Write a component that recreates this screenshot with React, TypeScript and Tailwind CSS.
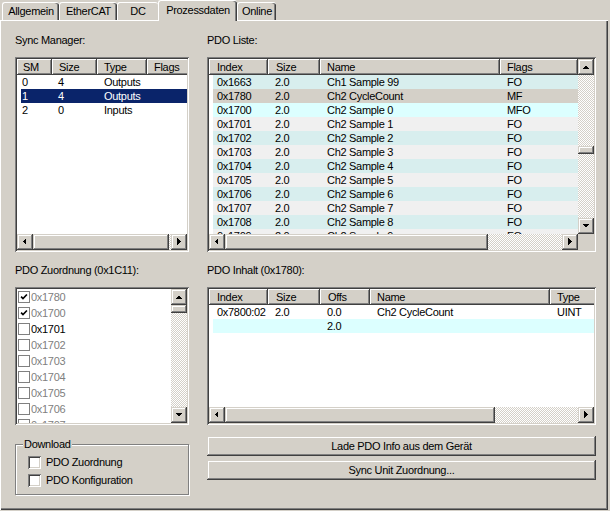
import React from 'react';

// classic 3D edges
const raised =
  'bg-[#d4d0c8] shadow-[inset_-1px_-1px_0_#404040,inset_1px_1px_0_#d4d0c8,inset_-2px_-2px_0_#808080,inset_2px_2px_0_#ffffff]';
const headerCell =
  'bg-[#d4d0c8] shadow-[inset_-1px_-1px_0_#404040,inset_1px_1px_0_#ffffff,inset_-2px_-2px_0_#808080]';
const sunken =
  'bg-white p-[2px] shadow-[inset_1px_1px_0_#808080,inset_-1px_-1px_0_#ffffff,inset_2px_2px_0_#404040,inset_-2px_-2px_0_#d4d0c8]';
const checker =
  'bg-[image:repeating-conic-gradient(#d4d0c8_0_25%,#ffffff_0_50%)] bg-[length:2px_2px]';

const arrowPaths = {
  up: 'M4 10 H11 L7.5 6.5 Z',
  down: 'M4 6 H11 L7.5 9.5 Z',
  left: 'M9 4 V11 L5.5 7.5 Z',
  right: 'M6 4 V11 L9.5 7.5 Z',
};

const Arrow = ({ dir }: { dir: keyof typeof arrowPaths }) => (
  <div className={`w-[16px] h-[16px] shrink-0 ${raised}`}>
    <svg width="16" height="16" viewBox="0 0 16 16" shapeRendering="crispEdges">
      <path d={arrowPaths[dir]} fill="#000" />
    </svg>
  </div>
);

type Cell = { text: string; cls: string };

const Header = ({ cells }: { cells: Cell[] }) => (
  <div className="flex h-[16px] shrink-0 overflow-hidden">
    {cells.map((c) => (
      <div key={c.text} className={`${headerCell} ${c.cls} h-[16px] shrink-0 leading-[16px] whitespace-nowrap overflow-hidden`}>
        {c.text}
      </div>
    ))}
  </div>
);

const Row = ({ values, cls, bg }: { values: string[]; cls: string[]; bg: string }) => (
  <div className={`flex h-[14px] leading-[14px] ml-[4px] shrink-0 whitespace-nowrap ${bg}`}>
    {values.map((v, i) => (
      <div key={i} className={`${cls[i]} shrink-0 overflow-hidden`}>
        {v}
      </div>
    ))}
  </div>
);

const CheckMark = () => (
  <svg width="12" height="12" viewBox="0 0 12 12">
    <path d="M2.5 5.5 L4.8 7.8 L9.5 3" stroke="#000" strokeWidth="2" fill="none" />
  </svg>
);

const tabs = [
  { label: 'Allgemein', cls: 'w-[57px]' },
  { label: 'EtherCAT', cls: 'w-[58px]' },
  { label: 'DC', cls: 'w-[41px]', beforeActive: true },
  { label: 'Prozessdaten', cls: 'w-[79px]', active: true },
  { label: 'Online', cls: 'w-[39px]' },
];

const smHeader: Cell[] = [
  { text: 'SM', cls: 'w-[35px] pl-[6px]' },
  { text: 'Size', cls: 'w-[45px] pl-[7px]' },
  { text: 'Type', cls: 'w-[50px] pl-[7px]' },
  { text: 'Flags', cls: 'w-[46px] pl-[7px]' },
];
const smCols = ['w-[31px] pl-[1px]', 'w-[45px] pl-[6px]', 'w-[50px] pl-[7px]', 'w-[40px] pl-[7px]'];
const smRows = [
  { v: ['0', '4', 'Outputs', ''], bg: '' },
  { v: ['1', '4', 'Outputs', ''], bg: 'bg-[#0a246a] text-white' },
  { v: ['2', '0', 'Inputs', ''], bg: '' },
];

const pdoHeader: Cell[] = [
  { text: 'Index', cls: 'w-[59px] pl-[8px]' },
  { text: 'Size', cls: 'w-[52px] pl-[8px]' },
  { text: 'Name', cls: 'w-[180px] pl-[7px]' },
  { text: 'Flags', cls: 'w-[78px] pl-[7px]' },
];
const pdoCols = ['w-[55px] pl-[4px]', 'w-[52px] pl-[7px]', 'w-[180px] pl-[7px]', 'w-[78px] pl-[7px]'];
const cyan = 'bg-[#d8eeee]';
const light = 'bg-[#f0f0f0]';
const pdoRows = [
  { v: ['0x1663', '2.0', 'Ch1 Sample 99', 'FO'], bg: cyan },
  { v: ['0x1780', '2.0', 'Ch2 CycleCount', 'MF'], bg: 'bg-[#d4d0c8]' },
  { v: ['0x1700', '2.0', 'Ch2 Sample 0', 'MFO'], bg: 'bg-[#dcffff]' },
  { v: ['0x1701', '2.0', 'Ch2 Sample 1', 'FO'], bg: light },
  { v: ['0x1702', '2.0', 'Ch2 Sample 2', 'FO'], bg: cyan },
  { v: ['0x1703', '2.0', 'Ch2 Sample 3', 'FO'], bg: light },
  { v: ['0x1704', '2.0', 'Ch2 Sample 4', 'FO'], bg: cyan },
  { v: ['0x1705', '2.0', 'Ch2 Sample 5', 'FO'], bg: light },
  { v: ['0x1706', '2.0', 'Ch2 Sample 6', 'FO'], bg: cyan },
  { v: ['0x1707', '2.0', 'Ch2 Sample 7', 'FO'], bg: light },
  { v: ['0x1708', '2.0', 'Ch2 Sample 8', 'FO'], bg: cyan },
  { v: ['0x1709', '2.0', 'Ch2 Sample 9', 'FO'], bg: light },
];

const assignItems = [
  { id: '0x1780', checked: true, enabled: false },
  { id: '0x1700', checked: true, enabled: false },
  { id: '0x1701', checked: false, enabled: true },
  { id: '0x1702', checked: false, enabled: false },
  { id: '0x1703', checked: false, enabled: false },
  { id: '0x1704', checked: false, enabled: false },
  { id: '0x1705', checked: false, enabled: false },
  { id: '0x1706', checked: false, enabled: false },
  { id: '0x1707', checked: false, enabled: false },
];

const contentHeader: Cell[] = [
  { text: 'Index', cls: 'w-[59px] pl-[8px]' },
  { text: 'Size', cls: 'w-[52px] pl-[8px]' },
  { text: 'Offs', cls: 'w-[50px] pl-[8px]' },
  { text: 'Name', cls: 'w-[180px] pl-[7px]' },
  { text: 'Type', cls: 'w-[60px] pl-[7px]' },
];
const contentCols = ['w-[55px] pl-[4px]', 'w-[52px] pl-[7px]', 'w-[50px] pl-[7px]', 'w-[180px] pl-[7px]', 'w-[44px] pl-[7px]'];

const Checkbox3D = () => (
  <div className="w-[13px] h-[13px] shrink-0 bg-white shadow-[inset_1px_1px_0_#808080,inset_-1px_-1px_0_#ffffff,inset_2px_2px_0_#404040,inset_-2px_-2px_0_#d4d0c8]" />
);

export default function App() {
  return (
    <div className="w-[610px] h-[511px] bg-[#d4d0c8] font-['Liberation_Sans',Arial,sans-serif] text-[11px] leading-[13px] tracking-[-0.3px] text-black select-none">
      {/* tabs */}
      <div className="flex items-end h-[20px] pl-[2px]">
        {tabs.map((t) =>
          t.active ? (
            <div
              key={t.label}
              className={`${t.cls} relative z-10 -mb-px h-[21px] shrink-0 bg-[#d4d0c8] border-l border-t border-white rounded-t-[3px] shadow-[inset_-1px_0_0_#404040,inset_-2px_0_0_#808080] text-center pt-[3px]`}
            >
              {t.label}
            </div>
          ) : (
            <div
              key={t.label}
              className={`${t.cls} h-[18px] shrink-0 flex items-center justify-center border-l border-t border-white rounded-t-[3px] ${
                t.beforeActive ? '' : 'shadow-[inset_-1px_0_0_#404040,inset_-2px_0_0_#808080]'
              }`}
            >
              {t.label}
            </div>
          )
        )}
      </div>

      {/* panel */}
      <div className="w-[608px] h-[490px] pt-[14px] pl-[15px] shadow-[inset_1px_1px_0_#ffffff,inset_-1px_-1px_0_#404040,inset_-2px_-2px_0_#808080]">
        <div className="flex gap-[18px]">
          {/* left column */}
          <div className="w-[174px] flex flex-col">
            <div>Sync Manager:</div>
            <div className={`mt-[10px] h-[195px] ${sunken}`}>
              <div className="flex flex-col h-full">
                <Header cells={smHeader} />
                <div className="h-[159px] overflow-hidden">
                  {smRows.map((r, i) => (
                    <Row key={i} values={r.v} cls={smCols} bg={r.bg} />
                  ))}
                </div>
                <div className="flex h-[16px]">
                  <Arrow dir="left" />
                  <div className={`${raised} w-[136px] h-[16px] shrink-0`} />
                  <div className={`flex-1 ${checker}`} />
                  <Arrow dir="right" />
                </div>
              </div>
            </div>

            <div className="mt-[12px]">PDO Zuordnung (0x1C11):</div>
            <div className={`mt-[10px] h-[138px] ${sunken}`}>
              <div className="flex h-full">
                <div className="w-[154px] overflow-hidden">
                  {assignItems.map((it) => (
                    <div key={it.id} className="flex items-center h-[16px] pl-[1px] gap-[1px]">
                      <div className="w-[12px] h-[12px] border border-[#808080] bg-white flex items-center justify-center">
                        {it.checked && <CheckMark />}
                      </div>
                      <span className={it.enabled ? 'text-black' : 'text-[#808080]'}>{it.id}</span>
                    </div>
                  ))}
                </div>
                <div className="w-[16px] flex flex-col">
                  <Arrow dir="up" />
                  <div className={`${raised} h-[8px] w-[16px] shrink-0`} />
                  <div className={`flex-1 ${checker}`} />
                  <Arrow dir="down" />
                </div>
              </div>
            </div>

            <div className="relative mt-[19px] h-[51px] border border-[#808080] shadow-[inset_1px_1px_0_#ffffff,1px_1px_0_#ffffff] pt-[8px] pl-[12px]">
              <span className="absolute -top-[7px] left-[7px] px-[1px] bg-[#d4d0c8]">Download</span>
              <div className="flex items-center h-[18px] gap-[5px]">
                <Checkbox3D />
                <span>PDO Zuordnung</span>
              </div>
              <div className="flex items-center h-[18px] gap-[5px]">
                <Checkbox3D />
                <span>PDO Konfiguration</span>
              </div>
            </div>
          </div>

          {/* right column */}
          <div className="w-[389px] flex flex-col">
            <div>PDO Liste:</div>
            <div className={`mt-[10px] h-[195px] ${sunken}`}>
              <div className="flex flex-col h-full">
                <div className="flex h-[175px]">
                  <div className="w-[369px] flex flex-col overflow-hidden">
                    <Header cells={pdoHeader} />
                    <div className="flex-1 overflow-hidden">
                      {pdoRows.map((r) => (
                        <Row key={r.v[0]} values={r.v} cls={pdoCols} bg={r.bg} />
                      ))}
                    </div>
                  </div>
                  <div className="w-[16px] flex flex-col">
                    <Arrow dir="up" />
                    <div className={`h-[71px] shrink-0 ${checker}`} />
                    <div className={`${raised} h-[8px] w-[16px] shrink-0`} />
                    <div className={`flex-1 ${checker}`} />
                    <Arrow dir="down" />
                  </div>
                </div>
                <div className="flex h-[16px]">
                  <Arrow dir="left" />
                  <div className={`${raised} w-[263px] h-[16px] shrink-0`} />
                  <div className={`flex-1 ${checker}`} />
                  <Arrow dir="right" />
                  <div className="w-[16px] h-[16px] bg-[#d4d0c8] shrink-0" />
                </div>
              </div>
            </div>

            <div className="mt-[12px]">PDO Inhalt (0x1780):</div>
            <div className={`mt-[10px] h-[138px] ${sunken}`}>
              <div className="flex flex-col h-full">
                <Header cells={contentHeader} />
                <div className="h-[102px] overflow-hidden">
                  <Row values={['0x7800:02', '2.0', '0.0', 'Ch2 CycleCount', 'UINT']} cls={contentCols} bg="" />
                  <Row values={['', '', '2.0', '', '']} cls={contentCols} bg="bg-[#dcffff]" />
                </div>
                <div className="flex h-[16px]">
                  <Arrow dir="left" />
                  <div className={`${raised} w-[270px] h-[16px] shrink-0`} />
                  <div className={`flex-1 ${checker}`} />
                  <Arrow dir="right" />
                </div>
              </div>
            </div>

            <button className={`mt-[11px] h-[20px] w-full text-center leading-[20px] ${raised}`}>
              Lade PDO Info aus dem Gerät
            </button>
            <button className={`mt-[4px] h-[20px] w-full text-center leading-[20px] ${raised}`}>
              Sync Unit Zuordnung...
            </button>
          </div>
        </div>
      </div>
    </div>
  );
}
